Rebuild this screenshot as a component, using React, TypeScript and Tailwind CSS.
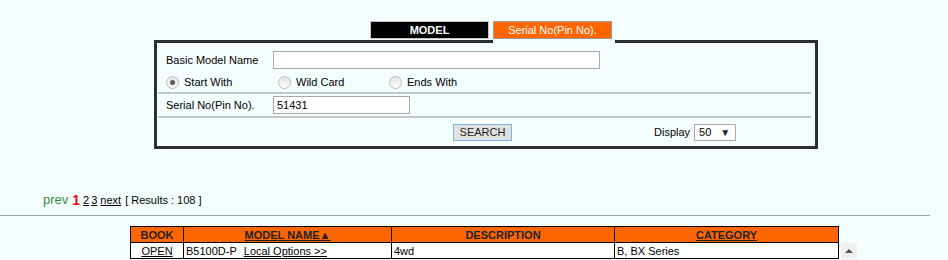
import React from "react";

function Radio({ checked }: { checked?: boolean }) {
  return (
    <span className="inline-flex items-center justify-center w-[13px] h-[13px] rounded-full border border-[#b8b8b8] bg-gradient-to-b from-[#e4e4e4] to-[#fbfbfb]">
      {checked && <span className="w-[5px] h-[5px] rounded-full bg-[#5a5a5a]" />}
    </span>
  );
}

export default function App() {
  return (
    <div className="min-h-screen bg-[#f5fefe] font-['Liberation_Sans',Arial,sans-serif] text-[11px] text-black">
      {/* tabs */}
      <div className="pt-[21px] pl-[370px] flex gap-[4px]">
        <div className="w-[119px] h-[18px] bg-black border border-[#c4c4c4] text-white font-bold flex items-center justify-center">
          MODEL
        </div>
        <div className="w-[119px] h-[18px] bg-[#ff6600] border border-[#9a9a9a] text-white flex items-center justify-center">
          Serial No(Pin No).
        </div>
      </div>

      {/* search box */}
      <div className="ml-[154px] mt-[1px] w-[664px]">
        <div className="flex">
          <div className="w-[339px] h-[3px] bg-[#2b2f33]" />
          <div className="w-[122px] h-[3px]" />
          <div className="flex-1 h-[3px] bg-[#2b2f33]" />
        </div>
        <div className="border-x-[3px] border-b-[3px] border-[#2b2f33] pl-[1px] pr-[4px]">
          <div className="flex items-center pt-[8px]">
            <div className="w-[115px] pl-[8px]">Basic Model Name</div>
            <div className="w-[327px] h-[18px] border border-[#a9a9a9] bg-white" />
          </div>
          <div className="flex items-center h-[23px] pt-[3px] pl-[8px]">
            <label className="w-[112px] flex items-center gap-[5px]">
              <Radio checked />
              <span>Start With</span>
            </label>
            <label className="w-[111px] flex items-center gap-[5px]">
              <Radio />
              <span>Wild Card</span>
            </label>
            <label className="flex items-center gap-[5px]">
              <Radio />
              <span>Ends With</span>
            </label>
          </div>
          <div className="h-[2px] bg-[#c6c9c9]" />
          <div className="flex items-center h-[22px]">
            <div className="w-[115px] pl-[8px]">Serial No(Pin No).</div>
            <div className="w-[137px] h-[18px] border border-[#a9a9a9] bg-white flex items-center pl-[3px]">51431</div>
          </div>
          <div className="h-[2px] bg-[#c6c9c9]" />
          <div className="flex items-start h-[28px] pt-[6px] pl-[295px]">
            <div className="w-[59px] h-[17px] bg-[#e1e1e1] border border-[#7eb4ea] flex items-center justify-center text-[#222]">
              SEARCH
            </div>
            <div className="ml-[142px] flex items-center gap-[4px]">
              <span>Display</span>
              <div className="w-[42px] h-[17px] bg-white border border-[#a9a9a9] flex items-center justify-between pl-[4px] pr-[5px]">
                <span>50</span>
                <span className="text-[10px] text-[#222]">▼</span>
              </div>
            </div>
          </div>
        </div>
      </div>

      {/* pagination */}
      <div className="mt-[43px] pl-[43px] h-[16px] flex items-center">
        <span className="text-[13px] text-[#3b8a3b]">prev</span>
        <span className="ml-[4px] text-[14px] font-bold text-[#ff0000]">1</span>
        <span className="ml-[3px] underline">2</span>
        <span className="ml-[2px] underline">3</span>
        <span className="ml-[3px] underline">next</span>
        <span className="ml-[4px]">[ Results : 108 ]</span>
      </div>
      <div className="mt-[7px] w-[930px] h-[1px] bg-[#a6a6a6]" />

      {/* results */}
      <div className="mt-[10px] ml-[130px] flex items-end">
        <table className="table-fixed border-collapse w-[708px]">
          <colgroup>
            <col className="w-[53px]" />
            <col className="w-[208px]" />
            <col className="w-[223px]" />
            <col className="w-[224px]" />
          </colgroup>
          <thead>
            <tr className="bg-[#ff6600] h-[16px] font-bold text-[#222]">
              <th className="border border-black p-0 font-bold leading-[14px]">BOOK</th>
              <th className="border border-black p-0 font-bold leading-[14px] underline">MODEL NAME▲</th>
              <th className="border border-black p-0 font-bold leading-[14px]">DESCRIPTION</th>
              <th className="border border-black p-0 font-bold leading-[14px] underline">CATEGORY</th>
            </tr>
          </thead>
          <tbody>
            <tr className="bg-white h-[16px]">
              <td className="border border-black p-0 leading-[14px] text-center underline">OPEN</td>
              <td className="border border-black p-0 leading-[14px] pl-[2px]">
                B5100D-P<span className="ml-[7px] underline">Local Options &gt;&gt;</span>
              </td>
              <td className="border border-black p-0 leading-[14px] pl-[2px]">4wd</td>
              <td className="border border-black p-0 leading-[14px] pl-[2px]">B, BX Series</td>
            </tr>
          </tbody>
        </table>
        <div className="ml-[2px] w-[16px] h-[16px] bg-[#f0f0f0] flex items-center justify-center">
          <span className="w-0 h-0 border-x-[4px] border-x-transparent border-b-[4px] border-b-[#505050]" />
        </div>
      </div>
    </div>
  );
}
